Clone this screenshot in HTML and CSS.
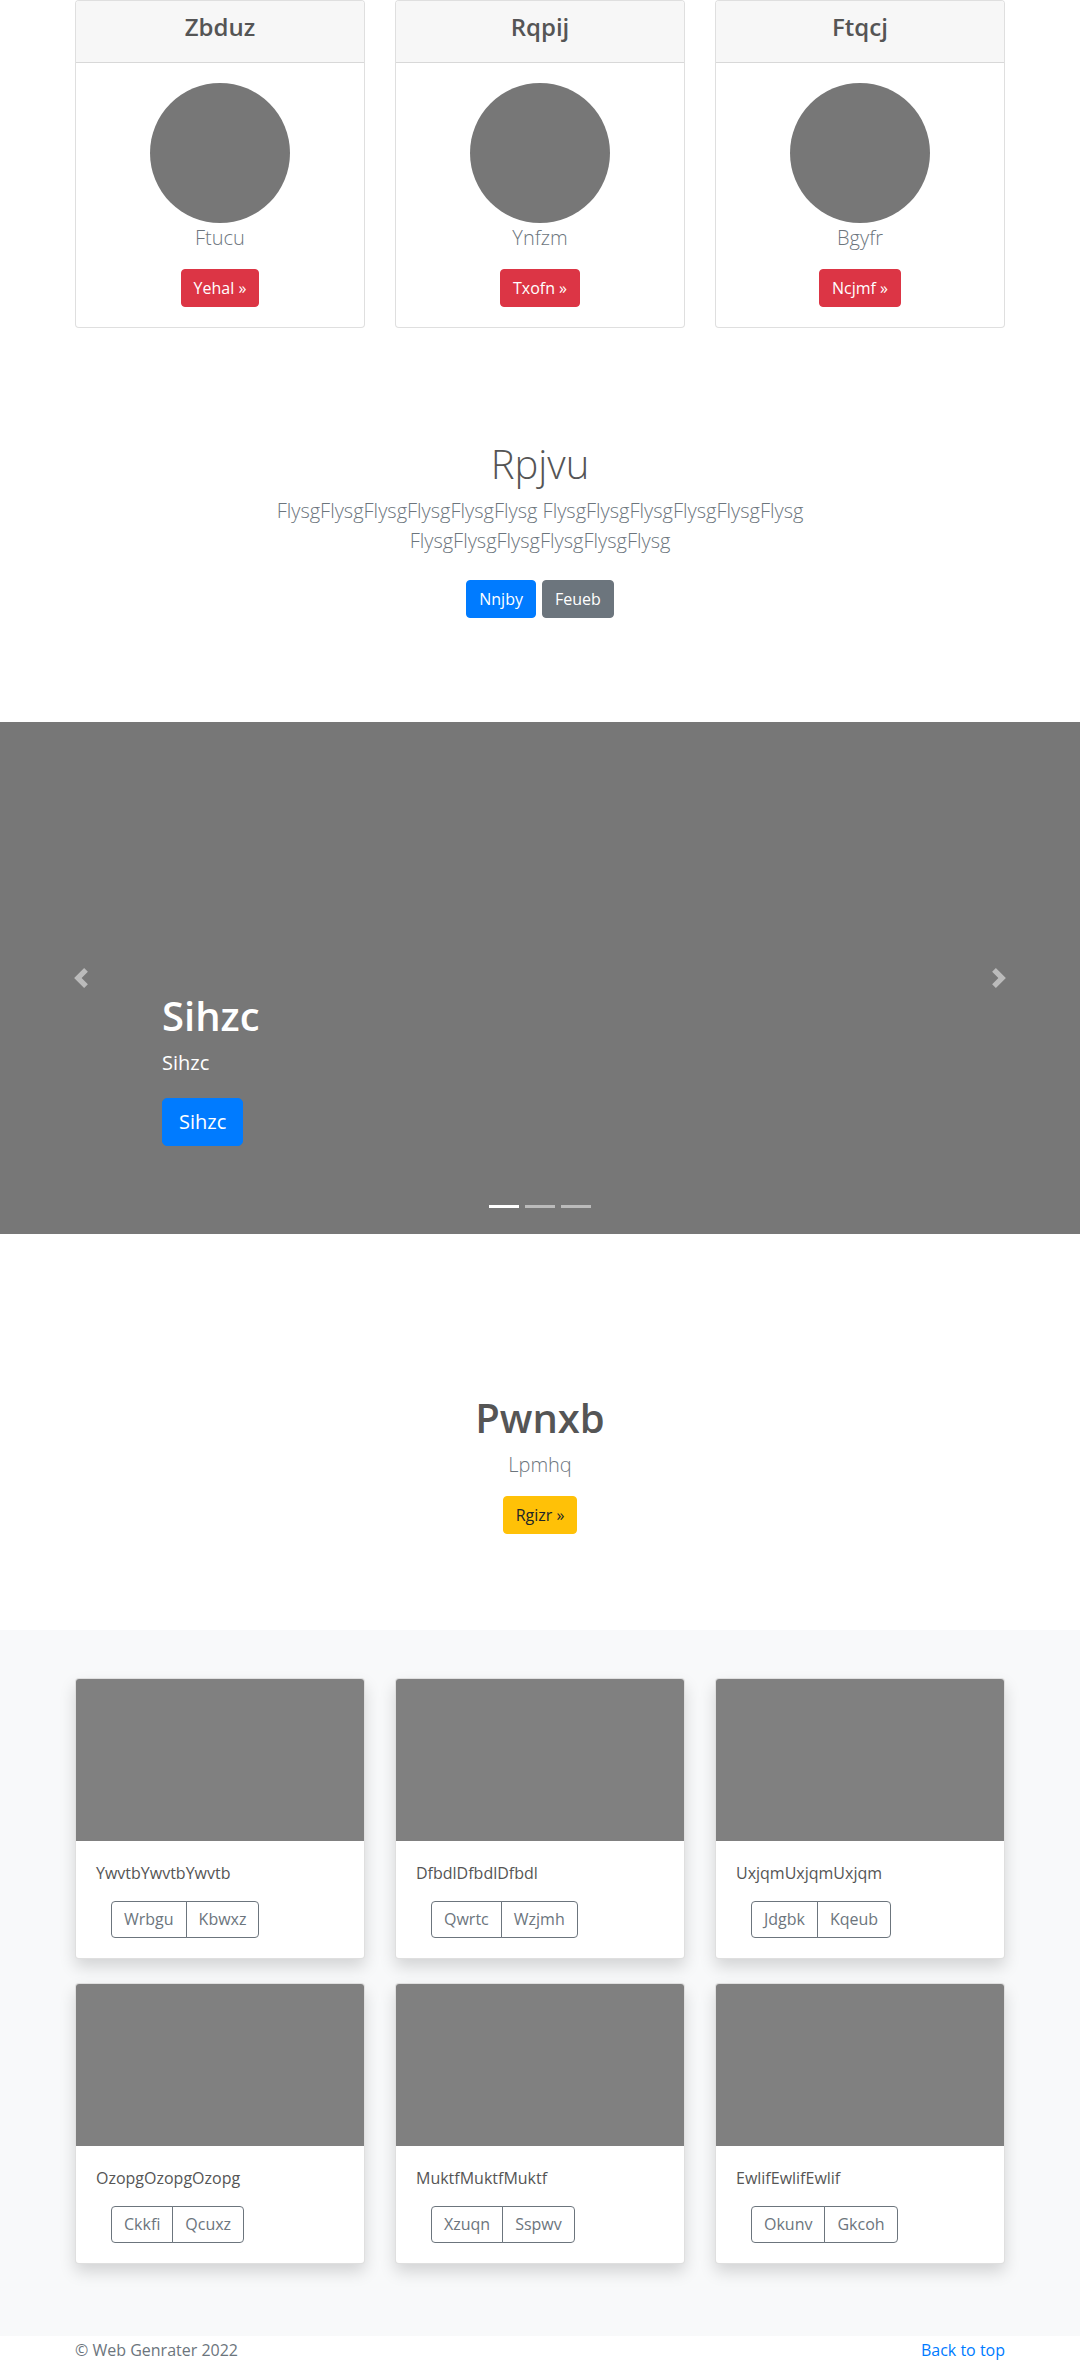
FILE: index.html
```html
<!DOCTYPE html>
<html lang="en">
<head>
<meta charset="utf-8">
<title>Web Genrater</title>
<link rel="stylesheet" href="styles.css">
</head>
<body>
<main>
  <section class="team">
    <div class="container grid3">
      <div class="card">
        <div class="card-header"><h4>Zbduz</h4></div>
        <div class="card-body">
          <div class="avatar"></div>
          <p class="lead muted">Ftucu</p>
          <a class="btn btn-danger" href="#">Yehal &raquo;</a>
        </div>
      </div>
      <div class="card">
        <div class="card-header"><h4>Rqpij</h4></div>
        <div class="card-body">
          <div class="avatar"></div>
          <p class="lead muted">Ynfzm</p>
          <a class="btn btn-danger" href="#">Txofn &raquo;</a>
        </div>
      </div>
      <div class="card">
        <div class="card-header"><h4>Ftqcj</h4></div>
        <div class="card-body">
          <div class="avatar"></div>
          <p class="lead muted">Bgyfr</p>
          <a class="btn btn-danger" href="#">Ncjmf &raquo;</a>
        </div>
      </div>
    </div>
  </section>

  <section class="intro">
    <div class="intro-inner">
      <h1 class="intro-title">Rpjvu</h1>
      <p class="lead muted">FlysgFlysgFlysgFlysgFlysgFlysg FlysgFlysgFlysgFlysgFlysgFlysg FlysgFlysgFlysgFlysgFlysgFlysg</p>
      <p class="intro-actions">
        <a class="btn btn-primary" href="#">Nnjby</a>
        <a class="btn btn-secondary" href="#">Feueb</a>
      </p>
    </div>
  </section>

  <section class="carousel">
    <a class="carousel-control prev" href="#" aria-label="Previous">
      <svg width="20" height="20" viewBox="0 0 8 8"><path fill="#fff" d="M5.25 0l-4 4 4 4 1.5-1.5L4.25 4l2.5-2.5L5.25 0z"/></svg>
    </a>
    <a class="carousel-control next" href="#" aria-label="Next">
      <svg width="20" height="20" viewBox="0 0 8 8"><path fill="#fff" d="M2.75 0l-1.5 1.5L3.75 4l-2.5 2.5L2.75 8l4-4-4-4z"/></svg>
    </a>
    <div class="carousel-caption">
      <h1>Sihzc</h1>
      <p class="caption-text">Sihzc</p>
      <p class="caption-actions"><a class="btn btn-lg btn-primary" href="#">Sihzc</a></p>
    </div>
    <ol class="indicators">
      <li class="active"></li>
      <li></li>
      <li></li>
    </ol>
  </section>

  <section class="feature">
    <h1 class="feature-title">Pwnxb</h1>
    <p class="lead muted">Lpmhq</p>
    <a class="btn btn-warning" href="#">Rgizr &raquo;</a>
  </section>

  <section class="album">
    <div class="container grid3 album-grid">
      <div class="card shadow">
        <div class="thumb"></div>
        <div class="card-body left">
          <p class="card-text">YwvtbYwvtbYwvtb</p>
          <div class="card-actions">
            <div class="btn-group"><a class="btn btn-outline" href="#">Wrbgu</a><a class="btn btn-outline" href="#">Kbwxz</a></div>
          </div>
        </div>
      </div>
      <div class="card shadow">
        <div class="thumb"></div>
        <div class="card-body left">
          <p class="card-text">DfbdlDfbdlDfbdl</p>
          <div class="card-actions">
            <div class="btn-group"><a class="btn btn-outline" href="#">Qwrtc</a><a class="btn btn-outline" href="#">Wzjmh</a></div>
          </div>
        </div>
      </div>
      <div class="card shadow">
        <div class="thumb"></div>
        <div class="card-body left">
          <p class="card-text">UxjqmUxjqmUxjqm</p>
          <div class="card-actions">
            <div class="btn-group"><a class="btn btn-outline" href="#">Jdgbk</a><a class="btn btn-outline" href="#">Kqeub</a></div>
          </div>
        </div>
      </div>
      <div class="card shadow">
        <div class="thumb"></div>
        <div class="card-body left">
          <p class="card-text">OzopgOzopgOzopg</p>
          <div class="card-actions">
            <div class="btn-group"><a class="btn btn-outline" href="#">Ckkfi</a><a class="btn btn-outline" href="#">Qcuxz</a></div>
          </div>
        </div>
      </div>
      <div class="card shadow">
        <div class="thumb"></div>
        <div class="card-body left">
          <p class="card-text">MuktfMuktfMuktf</p>
          <div class="card-actions">
            <div class="btn-group"><a class="btn btn-outline" href="#">Xzuqn</a><a class="btn btn-outline" href="#">Sspwv</a></div>
          </div>
        </div>
      </div>
      <div class="card shadow">
        <div class="thumb"></div>
        <div class="card-body left">
          <p class="card-text">EwlifEwlifEwlif</p>
          <div class="card-actions">
            <div class="btn-group"><a class="btn btn-outline" href="#">Okunv</a><a class="btn btn-outline" href="#">Gkcoh</a></div>
          </div>
        </div>
      </div>
    </div>
  </section>
</main>

<footer class="footer">
  <div class="container footer-inner">
    <p>&copy; Web Genrater 2022</p>
    <p><a href="#">Back to top</a></p>
  </div>
</footer>
</body>
</html>
```

FILE: styles.css
```css
* {
  box-sizing: border-box;
}

html, body {
  margin: 0;
  padding: 0;
}

body {
  font-family: "Open Sans", "Noto Sans", sans-serif;
  font-size: 16px;
  line-height: 1.5;
  color: #555;
  background: #fff;
}

a {
  color: #007bff;
  text-decoration: none;
}

p {
  margin: 0 0 16px;
}

.container {
  width: 930px;
  margin: 0 auto;
}

.grid3 {
  display: grid;
  grid-template-columns: repeat(3, 290px);
  column-gap: 30px;
}

/* cards */
.card {
  background: #fff;
  border: 1px solid rgba(0, 0, 0, 0.125);
  border-radius: 4px;
  overflow: hidden;
}

.card.shadow {
  box-shadow: 0 8px 16px rgba(0, 0, 0, 0.15);
}

.card-header {
  padding: 12px 20px;
  background: #f7f7f7;
  border-bottom: 1px solid rgba(0, 0, 0, 0.125);
  text-align: center;
}

.card-header h4 {
  margin: 0 0 8px;
  font-size: 24px;
  font-weight: 600;
  line-height: 1.2;
  color: #555;
}

.card-body {
  padding: 20px;
  text-align: center;
}

.card-body.left {
  text-align: left;
}

.avatar {
  width: 140px;
  height: 140px;
  margin: 0 auto;
  border-radius: 50%;
  background: #777;
}

.lead {
  font-size: 20px;
  font-weight: 300;
  line-height: 1.5;
}

.muted {
  color: #6c757d;
}

/* buttons */
.btn {
  display: inline-block;
  padding: 6px 12px;
  font-size: 16px;
  line-height: 24px;
  border: 1px solid transparent;
  border-radius: 4px;
  text-align: center;
  vertical-align: middle;
  white-space: nowrap;
}

.btn-danger {
  background: #dc3545;
  border-color: #dc3545;
  color: #fff;
}

.btn-primary {
  background: #007bff;
  border-color: #007bff;
  color: #fff;
}

.btn-secondary {
  background: #6c757d;
  border-color: #6c757d;
  color: #fff;
}

.btn-warning {
  background: #ffc107;
  border-color: #ffc107;
  color: #212529;
}

.btn-lg {
  padding: 8px 16px;
  font-size: 20px;
  line-height: 30px;
  border-radius: 5px;
}

.btn-outline {
  color: #6c757d;
  border-color: #6c757d;
  background: transparent;
  padding: 5.5px 12px;
}

.btn-group {
  display: inline-flex;
}

.btn-group .btn:first-child {
  border-radius: 4px 0 0 4px;
}

.btn-group .btn + .btn {
  margin-left: -1px;
  border-radius: 0 4px 4px 0;
}

/* intro */
.intro {
  padding: 112px 0 80px;
  text-align: center;
}

.intro-inner {
  width: 610px;
  margin: 0 auto;
}

.intro-title {
  margin: 0 0 8px;
  font-size: 40px;
  font-weight: 300;
  line-height: 1.2;
  color: #555;
}

.intro-actions {
  display: flex;
  justify-content: center;
  gap: 6px;
  margin: 0 0 16px;
  padding: 8px 0;
}

/* carousel */
.carousel {
  position: relative;
  height: 512px;
  background: #777;
}

.carousel-control {
  position: absolute;
  top: 0;
  bottom: 0;
  width: 15%;
  display: flex;
  align-items: center;
  justify-content: center;
  opacity: 0.5;
}

.carousel-control.prev {
  left: 0;
}

.carousel-control.next {
  right: 0;
}

.carousel-caption {
  position: absolute;
  left: 15%;
  right: 15%;
  bottom: 48px;
  padding: 20px 0;
  color: #fff;
  text-align: left;
}

.carousel-caption h1 {
  margin: 0 0 8px;
  font-size: 40px;
  font-weight: 600;
  line-height: 1.2;
}

.caption-text {
  margin: 0 0 20px;
  font-size: 20px;
  line-height: 30px;
}

.caption-actions {
  margin: 0 0 20px;
  line-height: 0;
}

.indicators {
  position: absolute;
  left: 0;
  right: 0;
  bottom: 26px;
  margin: 0;
  padding: 0;
  list-style: none;
  display: flex;
  justify-content: center;
  gap: 6px;
}

.indicators li {
  width: 30px;
  height: 3px;
  background: #fff;
  opacity: 0.5;
}

.indicators li.active {
  opacity: 1;
}

/* feature */
.feature {
  padding: 160px 0 96px;
  text-align: center;
}

.feature-title {
  margin: 0 0 8px;
  font-size: 40px;
  font-weight: 600;
  line-height: 1.2;
  color: #555;
}

/* album */
.album {
  background: #f8f9fa;
  padding: 48px 0;
}

.album-grid {
  row-gap: 0;
}

.album .card {
  margin-bottom: 24px;
}

.thumb {
  height: 162px;
  background: #808080;
}

.card-text {
  margin: 0 0 16px;
  color: #555;
}

.card-actions {
  padding-left: 15px;
}

/* footer */
.footer {
  padding-top: 2px;
  color: #6c757d;
}

.footer-inner {
  display: flex;
  justify-content: space-between;
}

.footer-inner p {
  margin: 0;
}
```
